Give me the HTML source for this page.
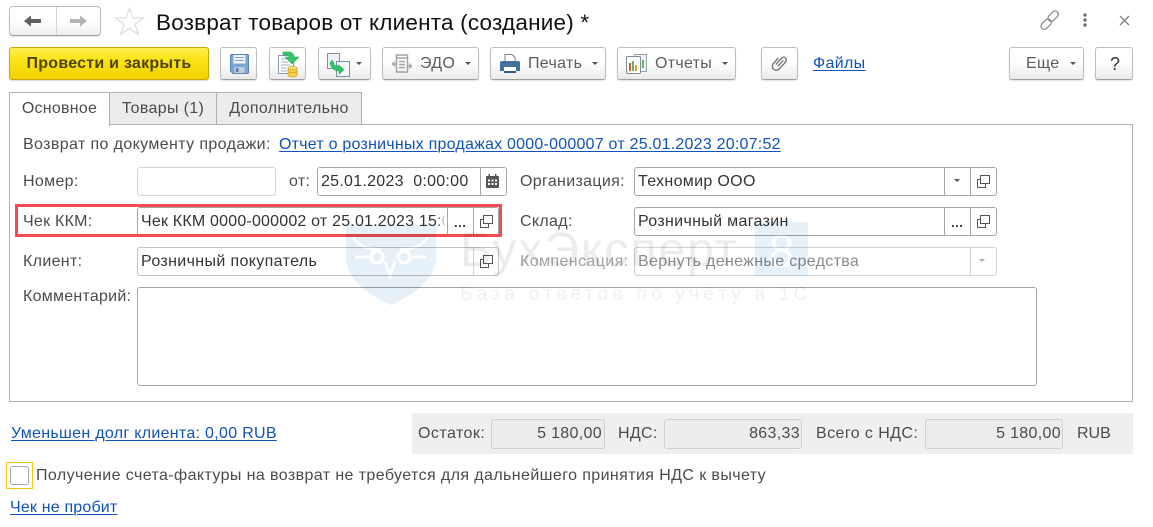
<!DOCTYPE html>
<html lang="ru"><head><meta charset="utf-8"><title>Возврат товаров</title>
<style>
*{box-sizing:border-box}
html,body{margin:0;padding:0;background:#fff}
body{width:1153px;height:527px;position:relative;overflow:hidden;font-family:"Liberation Sans",sans-serif;font-size:16px;letter-spacing:.33px;color:#4b4b4b}
.a{position:absolute;white-space:nowrap}
.t{position:absolute;white-space:nowrap;line-height:20px}
.btn{position:absolute;top:47px;height:33px;border:1px solid #bdbdbd;border-bottom-color:#9f9f9f;border-radius:3px;background:linear-gradient(#fff 0%,#fff 45%,#eaeaea 100%);box-shadow:0 1px 1px rgba(0,0,0,.12)}
.btn .l{position:absolute;top:6px;line-height:20px;color:#5c5c5c;font-size:16px;letter-spacing:.3px;white-space:nowrap}
.dd{position:absolute;top:14px;width:0;height:0;border-left:3.5px solid transparent;border-right:3.5px solid transparent;border-top:3.5px solid #555}
.f{position:absolute;height:29px;border:1px solid #a5a5a5;border-radius:3px;background:#fff}
.f.d{border-color:#d3d3d3}
.s{position:absolute;top:0;bottom:0;width:1px;background:#a5a5a5}
.f.d .s{background:#d3d3d3}
.v{position:absolute;left:3px;top:4px;line-height:20px;color:#333;white-space:nowrap}
.link{color:#0f52ba;text-decoration:underline;text-underline-offset:2px;text-decoration-thickness:1px}
.tab{position:absolute;top:92px;height:33px;border:1px solid #b0b0b0;background:#ececec;line-height:31px;text-align:center;color:#4b4b4b;letter-spacing:.33px}
.copy{position:absolute;top:7px;width:13px;height:13px}
.dots{position:absolute;top:5px;line-height:20px;color:#333;font-weight:bold;letter-spacing:.5px;font-size:13px}
.r{position:absolute;top:419px;height:30px;background:#ececec;border:1px solid #d0d0d0;border-radius:3px;text-align:right;line-height:28px;padding-right:1px;color:#4b4b4b}
</style></head><body>

<!-- nav -->
<div class="a" style="left:9px;top:6px;width:92px;height:30px;border:1px solid #bdbdbd;border-bottom-color:#9f9f9f;border-radius:4px;background:linear-gradient(#fff 50%,#eee);box-shadow:0 1px 1px rgba(0,0,0,.12)">
<div class="a" style="left:46px;top:0;bottom:0;width:1px;background:#d4d4d4"></div>
<svg class="a" style="left:13px;top:7px" width="20" height="14" viewBox="0 0 20 14"><path d="M1 7L8 1.500V5H18V9H8V12.500Z" fill="#5f5f5f"/></svg>
<svg class="a" style="left:58px;top:7px" width="20" height="14" viewBox="0 0 20 14"><path d="M19 7L12 1.500V5H2V9H12V12.500Z" fill="#b4b4b4"/></svg>
</div>
<svg class="a" style="left:114px;top:7px" width="31" height="29" viewBox="0 0 31 29"><path d="M15.500 1.500L19 11H29.500L21 17.300L24.300 27.500L15.500 21.200L6.700 27.500L10 17.300L1.500 11H12Z" fill="#fff" stroke="#d2d6db" stroke-width="1"/></svg>
<div class="a" style="left:156px;top:9px;font-size:22.5px;line-height:28px;color:#111;letter-spacing:.2px">Возврат товаров от клиента (создание) *</div>

<svg class="a" style="left:1038px;top:9px" width="23" height="22" viewBox="0 0 23 22" fill="none" stroke="#8c8c8c" stroke-width="1.300"><rect x="2" y="12" width="12" height="6.500" rx="3.250" transform="rotate(-45 8 15)"/><rect x="9" y="4" width="12" height="6.500" rx="3.250" transform="rotate(-45 15 7)"/></svg>
<svg class="a" style="left:1082px;top:12px" width="6" height="16" viewBox="0 0 6 16" fill="#777"><circle cx="3" cy="3" r="1.800"/><circle cx="3" cy="8" r="1.800"/><circle cx="3" cy="13" r="1.800"/></svg>
<svg class="a" style="left:1119px;top:15px" width="11" height="11" viewBox="0 0 11 11" stroke="#808080" stroke-width="1.300"><path d="M1 1l9 9M10 1l-9 9"/></svg>

<!-- toolbar -->
<div class="a" style="left:9px;top:47px;width:200px;height:33px;border:1px solid #c8a800;border-radius:3px;background:linear-gradient(#fff04d 0%,#fbe316 40%,#f1d000 100%);box-shadow:0 1px 1px rgba(0,0,0,.15);text-align:center;line-height:31px;font-weight:bold;font-size:16px;letter-spacing:.25px;color:#4f4300">Провести и закрыть</div>

<div class="btn" style="left:220px;width:37px">
<svg class="a" style="left:9px;top:6px" width="19" height="20" viewBox="0 0 19 20"><path d="M.5 1.500a1 1 0 0 1 1-1h16a1 1 0 0 1 1 1v17a1 1 0 0 1-1 1H3L.5 17Z" fill="#78a6d6" stroke="#5b84ae"/><rect x="3.500" y="1" width="12" height="8.500" fill="#f2f6fb"/><path d="M5 3.500h9M5 6.500h9" stroke="#7ba5cf"/><rect x="4.500" y="13" width="10" height="6" fill="#c3ced9"/><rect x="6" y="14" width="2.500" height="4" fill="#5f7d9c"/></svg>
</div>
<div class="btn" style="left:269px;width:37px">
<svg class="a" style="left:8px;top:3px" width="22" height="27" viewBox="0 0 22 27"><rect x=".5" y="4.500" width="15" height="18" fill="#fff" stroke="#8598ad"/><path d="M3 8h9M3 11h7M3 14h9M3 17h6M3 20h6" stroke="#9fb0c2"/><path d="M5 1h6c3 0 5 2 5 5h5l-7 7-7-7h4c0-1-1-2-2-2H5Z" fill="#35c46a" stroke="#1e9a4c" stroke-width=".5"/><path d="M10 17v7c0 1.200 1.800 2 4.500 2s4.500-.8 4.500-2v-7" fill="#f2cd47" stroke="#c29a1b" stroke-width=".6"/><ellipse cx="14.500" cy="17" rx="4.500" ry="1.800" fill="#f8e07a" stroke="#c29a1b" stroke-width=".6"/><path d="M10 20.500c1 1.300 8 1.300 9 0" fill="none" stroke="#c29a1b" stroke-width=".6"/></svg>
</div>
<div class="btn" style="left:318px;width:53px">
<svg class="a" style="left:8px;top:5px" width="23" height="24" viewBox="0 0 23 24"><rect x=".5" y=".5" width="12" height="15" fill="#eef2f6" stroke="#7e8fa3"/><rect x="9.500" y="8.500" width="13" height="15" fill="#f4f6f9" stroke="#7e8fa3"/><path d="M3 10l2-3 2 3v2l4 2v-2.500l6 5-5 5v-3.500C7 18 4 15 3 10Z" fill="#2fc267" stroke="#1ea653" stroke-width=".5"/></svg>
<div class="dd" style="left:37px"></div>
</div>
<div class="btn" style="left:382px;width:97px">
<svg class="a" style="left:9px;top:6px" width="20" height="20" viewBox="0 0 20 20" fill="none" stroke="#a2a2a2" stroke-width="1.500"><rect x="4.500" y="1" width="11" height="3"/><path d="M4.500 4v14h11V4M7 7.500h6M7 10.500h6M7 13.500h6"/><path d="M0 10h4M16 12h4"/><path d="M0 10l3-2.500M0 10l3 2.500M20 12l-3-2.500M20 12l-3 2.500" stroke-width="1"/></svg>
<div class="l" style="left:37px">ЭДО</div><div class="dd" style="left:82px"></div>
</div>
<div class="btn" style="left:490px;width:116px">
<svg class="a" style="left:9px;top:6px" width="20" height="20" viewBox="0 0 20 20"><path d="M5 .5h7l3 3V8H5Z" fill="#fff" stroke="#6d8299"/><path d="M2 7h16a2 2 0 0 1 2 2v8h-20V9a2 2 0 0 1 2-2Z" fill="#41719f"/><rect x="4" y="13" width="12" height="6" fill="#fff"/><rect x="4" y="17" width="12" height="2" fill="#2f5a85"/></svg>
<div class="l" style="left:37px">Печать</div><div class="dd" style="left:101px"></div>
</div>
<div class="btn" style="left:617px;width:119px">
<svg class="a" style="left:8px;top:6px" width="21" height="20" viewBox="0 0 21 20"><rect x="8.500" y=".5" width="12" height="17" fill="#f0f3f5" stroke="#97a4ad"/><rect x=".5" y="2.500" width="14" height="17" rx="1" fill="#fff" stroke="#7f8c96"/><rect x="3" y="9" width="2" height="8" fill="#d9534f"/><rect x="6" y="7" width="2" height="10" fill="#6cb05a"/><rect x="9" y="11" width="2" height="6" fill="#e0a030"/><rect x="16" y="6" width="2" height="8" fill="#6cb05a"/></svg>
<div class="l" style="left:37px">Отчеты</div><div class="dd" style="left:104px"></div>
</div>
<div class="btn" style="left:761px;width:37px">
<svg class="a" style="left:8px;top:5px" width="20" height="21" viewBox="0 0 20 21" fill="none" stroke="#777" stroke-width="1.400"><path transform="rotate(42 10 10.500)" d="M7.500 14V5.500a2.800 2.800 0 0 1 5.600 0V15a4 4 0 0 1-8 0V7.500M10.300 6v8"/></svg>
</div>
<div class="t link" style="left:813px;top:54px">Файлы</div>
<div class="btn" style="left:1009px;width:75px"><div class="l" style="left:16px">Еще</div><div class="dd" style="left:60px"></div></div>
<div class="btn" style="left:1095px;width:38px"><div class="l" style="left:14px;font-size:18px;color:#333">?</div></div>

<!-- panel -->
<div class="a" style="left:9px;top:124px;width:1124px;height:278px;border:1px solid #b0b0b0"></div>
<div class="tab" style="left:9px;width:101px;background:#fff;border-bottom:none;height:34px;color:#4b4b4b;letter-spacing:.25px">Основное</div>
<div class="tab" style="left:109px;width:108px">Товары (1)</div>
<div class="tab" style="left:216px;width:146px">Дополнительно</div>

<div class="t" style="left:23px;top:135px;letter-spacing:.38px">Возврат по документу продажи:</div>
<div class="t link" style="left:279px;top:135px;letter-spacing:.23px">Отчет о розничных продажах 0000-000007 от 25.01.2023 20:07:52</div>

<div class="t" style="left:23px;top:172px">Номер:</div>
<div class="f d" style="left:137px;top:167px;width:139px"></div>
<div class="t" style="left:289px;top:172px">от:</div>
<div class="f" style="left:317px;top:167px;width:190px"><div class="v" style="letter-spacing:.27px">25.01.2023&nbsp; 0:00:00</div><div class="s" style="left:162px"></div>
<svg class="a" style="left:168px;top:6px" width="13" height="14" viewBox="0 0 13 14"><path d="M1 2h11a1 1 0 0 1 1 1v10a1 1 0 0 1-1 1H1a1 1 0 0 1-1-1V3a1 1 0 0 1 1-1Z" fill="#555"/><rect x="2.500" y="0" width="1.500" height="3" fill="#555"/><rect x="9" y="0" width="1.500" height="3" fill="#555"/><g fill="#fff"><rect x="2" y="5.500" width="2" height="2"/><rect x="5.500" y="5.500" width="2" height="2"/><rect x="9" y="5.500" width="2" height="2"/><rect x="2" y="9" width="2" height="2"/><rect x="5.500" y="9" width="2" height="2"/><rect x="9" y="9" width="2" height="2"/></g></svg></div>

<div class="t" style="left:23px;top:212px;letter-spacing:.25px">Чек ККМ:</div>
<div class="f" style="left:137px;top:207px;width:362px"><div class="v" style="width:305px;overflow:hidden;letter-spacing:.2px;-webkit-mask-image:linear-gradient(90deg,#000 97%,transparent)">Чек ККМ 0000-000002 от 25.01.2023 15:07:52</div><div class="s" style="left:309px"></div><div class="s" style="left:335px"></div><div class="dots" style="left:316px">...</div>
<svg class="copy" style="left:342px" viewBox="0 0 13 13" fill="none" stroke="#555"><path d="M3.500.5h9v8h-9z"/><path d="M3.500 4.500h-3v8h8v-4"/></svg></div>
<div class="a" style="left:15px;top:204px;width:487px;height:33px;border:3px solid #f44a50"></div>

<div class="t" style="left:23px;top:252px">Клиент:</div>
<div class="f d" style="left:137px;top:247px;width:362px;border-color:#c4c4c4"><div class="v" style="letter-spacing:.36px">Розничный покупатель</div><div class="s" style="left:335px"></div>
<svg class="copy" style="left:342px" viewBox="0 0 13 13" fill="none" stroke="#555"><path d="M3.500.5h9v8h-9z"/><path d="M3.500 4.500h-3v8h8v-4"/></svg></div>

<div class="t" style="left:23px;top:287px;letter-spacing:.25px">Комментарий:</div>
<div class="f" style="left:137px;top:287px;width:900px;height:99px"></div>

<div class="t" style="left:520px;top:172px">Организация:</div>
<div class="f" style="left:634px;top:167px;width:363px"><div class="v">Техномир ООО</div><div class="s" style="left:309px"></div><div class="s" style="left:335px"></div><div class="dd" style="left:319px;top:11px"></div>
<svg class="copy" style="left:342px" viewBox="0 0 13 13" fill="none" stroke="#555"><path d="M3.500.5h9v8h-9z"/><path d="M3.500 4.500h-3v8h8v-4"/></svg></div>

<div class="t" style="left:520px;top:212px">Склад:</div>
<div class="f" style="left:634px;top:207px;width:363px"><div class="v">Розничный магазин</div><div class="s" style="left:309px"></div><div class="s" style="left:335px"></div><div class="dots" style="left:316px">...</div>
<svg class="copy" style="left:342px" viewBox="0 0 13 13" fill="none" stroke="#555"><path d="M3.500.5h9v8h-9z"/><path d="M3.500 4.500h-3v8h8v-4"/></svg></div>

<div class="t" style="left:520px;top:252px;color:#a3a3a3;letter-spacing:.4px">Компенсация:</div>
<div class="f d" style="left:634px;top:247px;width:363px"><div class="v" style="color:#8a8a8a">Вернуть денежные средства</div><div class="s" style="left:335px"></div><div class="dd" style="left:344px;top:11px;border-top-color:#aaa"></div></div>

<!-- bottom -->
<div class="t link" style="left:11px;top:424px;letter-spacing:.3px">Уменьшен долг клиента: 0,00 RUB</div>
<div class="a" style="left:412px;top:413px;width:721px;height:41px;background:#efefef"></div>
<div class="t" style="left:418px;top:424px;letter-spacing:.45px">Остаток:</div>
<div class="r" style="left:491px;width:114px;padding-right:2px">5 180,00</div>
<div class="t" style="left:618px;top:424px">НДС:</div>
<div class="r" style="left:664px;width:138px">863,33</div>
<div class="t" style="left:816px;top:424px;letter-spacing:.42px">Всего с НДС:</div>
<div class="r" style="left:925px;width:138px">5 180,00</div>
<div class="t" style="left:1077px;top:424px;letter-spacing:0">RUB</div>

<div class="a" style="left:6px;top:462px;width:27px;height:27px;border:1px solid #f2c811"></div>
<div class="a" style="left:10px;top:466px;width:19px;height:19px;border:1px solid #a8a8a8;border-radius:3px;background:#fff"></div>
<div class="t" style="left:36px;top:466px;letter-spacing:.4px">Получение счета-фактуры на возврат не требуется для дальнейшего принятия НДС к вычету</div>
<div class="t link" style="left:10px;top:498px;letter-spacing:.18px">Чек не пробит</div>

<!-- watermark -->
<div class="a" style="left:0;top:0;width:1153px;height:527px;mix-blend-mode:multiply;pointer-events:none">
<svg class="a" style="left:345px;top:225px" width="92" height="80" viewBox="0 0 92 80"><path d="M1 0H91V32C91 55 68 70 46 80C24 70 1 55 1 32Z" fill="#e5f0f8"/><g fill="none" stroke="#fff" stroke-width="3"><circle cx="32" cy="32" r="6"/><circle cx="59" cy="32" r="6"/><path d="M8 12c6 10 16 12 28 13M83 12c-6 10-16 12-28 13M10 32h14M67 32h14M40 36l5 15 5-15"/></g></svg>
<div class="a" style="left:460px;top:227px;font-size:48px;line-height:48px;letter-spacing:2px;color:#ececee">БухЭксперт</div>
<div class="a" style="left:460px;top:283px;font-size:19px;line-height:24px;letter-spacing:4.300px;color:#f0f0f1">База ответов по учёту в 1С</div>
<div class="a" style="left:755px;top:222px;width:53px;height:54px;background:#e6f1f9"></div>
<div class="a" style="left:755px;top:226px;width:53px;text-align:center;font-size:46px;line-height:50px;color:#fff;letter-spacing:0">8</div>
</div>
</body></html>
